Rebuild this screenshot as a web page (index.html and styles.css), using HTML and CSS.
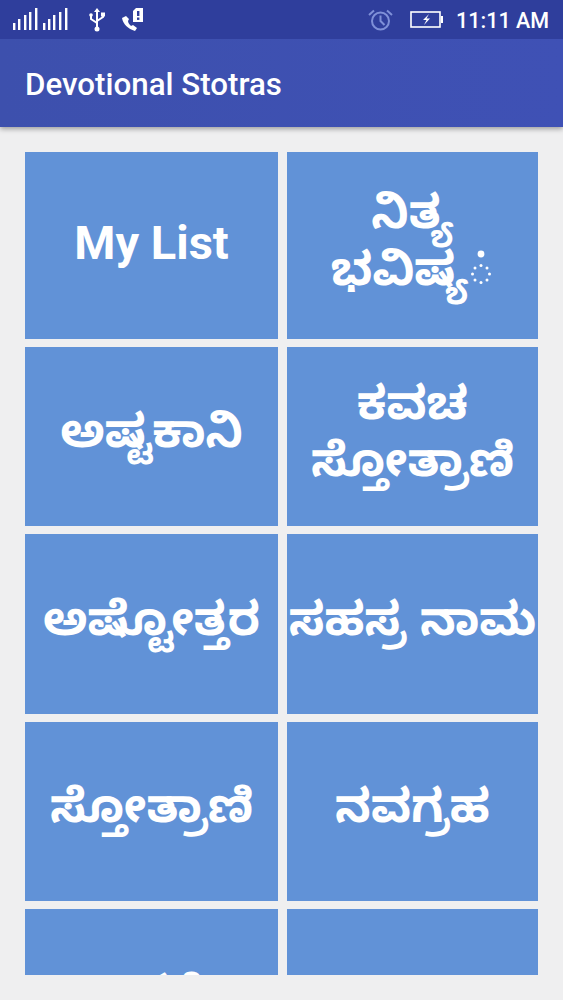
FILE: index.html
```html
<!DOCTYPE html>
<html lang="kn">
<head>
<meta charset="utf-8">
<title>Devotional Stotras</title>
<link rel="stylesheet" href="styles.css">
</head>
<body>
<header class="appbar">
  <div class="status">
    <div class="status-left">
      <svg class="signal" width="55" height="24" viewBox="0 0 55 24" fill="#fff">
        <rect x="0" y="15" width="2.400" height="7"/><rect x="5" y="11" width="2.400" height="11"/><rect x="11" y="7" width="2.400" height="15"/><rect x="16" y="4" width="2.400" height="18"/><rect x="22" y="0" width="2.400" height="22"/>
        <rect x="30" y="15" width="2.400" height="7"/><rect x="35" y="11" width="2.400" height="11"/><rect x="40" y="7" width="2.400" height="15"/><rect x="46" y="4" width="2.400" height="18"/><rect x="52" y="0" width="2.400" height="22"/>
      </svg>
      <svg class="usb" width="18" height="24" viewBox="0 0 18 24" fill="none" stroke="#fff" stroke-width="2">
        <path d="M9 3v17M3 8v3l6 4M15 7v2l-6 4"/>
        <path d="M9 0l3 4H6z" fill="#fff" stroke="none"/><circle cx="9" cy="21" r="2.500" fill="#fff" stroke="none"/>
        <circle cx="3" cy="7" r="1.800" fill="#fff" stroke="none"/><rect x="13" y="4.500" width="4" height="4" fill="#fff" stroke="none"/>
      </svg>
      <svg class="call" width="24" height="24" viewBox="0 0 24 24">
        <path d="M1 10c1 6 6 11 13 13l2-3-4-3-2 1c-1-1-3-3-3-5l1-2-3-3z" fill="#fff"/>
        <path d="M12 3l3-3h7v14H12z" fill="#fff"/>
        <rect x="16" y="3" width="2.400" height="5" fill="#2f3e9c"/><rect x="16" y="9.500" width="2.400" height="2.400" fill="#2f3e9c"/>
      </svg>
    </div>
    <div class="status-right">
      <svg class="alarm" width="25" height="22" viewBox="0 0 25 22" fill="none" stroke="#7f90d8" stroke-width="2">
        <circle cx="12.500" cy="12" r="8.500"/><path d="M12.500 6.500V12l4 4M1 6l5-4.500M24 6l-5-4.500"/>
      </svg>
      <svg class="battery" width="33" height="17" viewBox="0 0 33 17">
        <rect x="1" y="1" width="29" height="15" fill="none" stroke="#fff" stroke-width="1.600"/>
        <rect x="31" y="5" width="2" height="7" fill="#fff"/>
        <path d="M19 3l-6 6h3.500L14 14l6-6.500h-3.500z" fill="#fff"/>
      </svg>
      <span class="clock">11:11 AM</span>
    </div>
  </div>
  <div class="toolbar"><h1 class="title">Devotional Stotras</h1></div>
</header>
<main class="content">
  <div class="grid">
    <a class="card latin">My List</a>
    <a class="card kn"><span class="label">ನಿತ್ಯ<br>ಭವಿಷ್ಯ<svg class="spinner" width="26" height="44" viewBox="0 0 26 44" fill="#fff"><circle cx="13" cy="5" r="3.400"/><circle cx="13" cy="16.500" r="1.500"/><circle cx="19" cy="19" r="1.500"/><circle cx="21.500" cy="25" r="1.500"/><circle cx="19" cy="31" r="1.500"/><circle cx="13" cy="33.500" r="1.500"/><circle cx="7" cy="31" r="1.500"/><circle cx="4.500" cy="25" r="1.500"/><circle cx="7" cy="19" r="1.500"/></svg></span></a>
    <a class="card kn"><span class="label">ಅಷ್ಟಕಾನಿ</span></a>
    <a class="card kn"><span class="label">ಕವಚ<br>ಸ್ತೋತ್ರಾಣಿ</span></a>
    <a class="card kn"><span class="label">ಅಷ್ಟೋತ್ತರ</span></a>
    <a class="card kn"><span class="label">ಸಹಸ್ರ ನಾಮ</span></a>
    <a class="card kn"><span class="label">ಸ್ತೋತ್ರಾಣಿ</span></a>
    <a class="card kn"><span class="label">ನವಗ್ರಹ</span></a>
    <a class="card kn"><span class="label">ಇತರೆ</span></a>
    <a class="card kn"></a>
  </div>
</main>
</body>
</html>
```
FILE: styles.css
```css
* { box-sizing: border-box; }
html, body { margin: 0; padding: 0; }
body {
  width: 563px;
  height: 1000px;
  overflow: hidden;
  background: #efeff0;
  font-family: Roboto, "Noto Sans", sans-serif;
  display: flex;
  flex-direction: column;
}
.appbar {
  height: 127px;
  flex: none;
  background: #3f51b5;
  box-shadow: 0 2px 5px rgba(0,0,0,.35);
  position: relative;
  z-index: 1;
}
.status {
  height: 39px;
  background: #2f3e9c;
  display: flex;
  justify-content: space-between;
  align-items: center;
  padding: 0 14px 0 13px;
  color: #fff;
}
.status-left, .status-right { display: flex; align-items: center; }
.usb { margin-left: 20px; }
.call { margin-left: 15px; }
.alarm { margin-right: 17px; }
.battery { margin-right: 13px; }
.clock { font-size: 21.500px; font-weight: 500; padding-top: 1px; }
.toolbar {
  height: 88px;
  display: flex;
  align-items: center;
  padding: 3px 25px 0;
  background: linear-gradient(90deg, #3d50ad, #3f51b5);
}
.title { margin: 0; color: #fff; font-size: 31.300px; font-weight: 500; }
.content { height: 848px; flex: none; padding: 25px 25px 0; overflow: hidden; }
.grid {
  display: grid;
  grid-template-columns: 253px 251px;
  grid-template-rows: 187px 179px 180px 179px 179px;
  column-gap: 9px;
  row-gap: 8px;
}
.card {
  background: #6192d7;
  color: #fff;
  display: flex;
  align-items: center;
  justify-content: center;
  text-align: center;
  font-weight: 700;
}
.latin { font-size: 47px; padding-bottom: 6px; }
.kn { font-family: "Noto Sans Kannada", "Noto Sans", sans-serif; font-size: 46.500px; line-height: 57px; padding-top: 8px; }
.label { display: block; white-space: nowrap; }
.spinner { vertical-align: -8px; margin-top: -44px; }
```
